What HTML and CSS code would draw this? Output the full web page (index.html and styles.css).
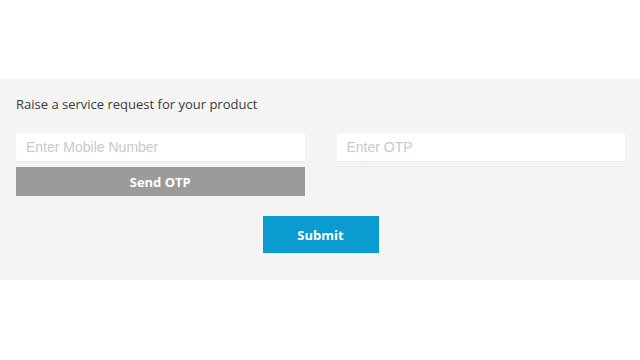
FILE: index.html
```html
<!DOCTYPE html>
<html>
<head>
<meta charset="utf-8">
<link rel="stylesheet" href="styles.css">
</head>
<body>
<div class="top"></div>
<section class="panel">
  <h1 class="title">Raise a service request for your product</h1>
  <div class="row">
    <div class="col">
      <input class="field" type="text" placeholder="Enter Mobile Number">
      <button class="btn-otp">Send OTP</button>
    </div>
    <div class="col">
      <input class="field" type="text" placeholder="Enter OTP">
      <div class="line"></div>
    </div>
  </div>
  <div class="actions">
    <button class="btn-submit">Submit</button>
  </div>
</section>
</body>
</html>
```
FILE: styles.css
```css
html, body {
  margin: 0;
  padding: 0;
  background: #ffffff;
}
body {
  font-family: "Open Sans", "Liberation Sans", sans-serif;
}
.top {
  height: 79px;
}
.panel {
  background: #f4f4f4;
  height: 201px;
  padding: 16px 15px 0 16px;
  box-sizing: border-box;
}
.title {
  margin: 0;
  font-size: 13px;
  font-weight: 400;
  color: #3a3a3a;
  line-height: 18px;
}
.row {
  display: flex;
  gap: 32px;
  margin-top: 20px;
}
.col {
  flex: 1;
  display: flex;
  flex-direction: column;
}
.field {
  height: 29px;
  box-sizing: border-box;
  border: none;
  border-bottom: 1px solid #ececec;
  background: #ffffff;
  padding: 0 10px;
  font-family: "Liberation Sans", Arial, sans-serif;
  font-size: 14px;
  color: #333;
  outline: none;
}
.field::placeholder {
  color: #c8c8c8;
}
.line {
  height: 1px;
  background: #ebebeb;
  margin-top: 4px;
}
.btn-otp {
  margin-top: 5px;
  height: 29px;
  border: none;
  background: #9b9b9b;
  color: #ffffff;
  font-family: "Open Sans", "Liberation Sans", sans-serif;
  font-weight: 700;
  font-size: 13px;
  padding: 0;
}
.actions {
  display: flex;
  justify-content: center;
  margin-top: 20px;
}
.btn-submit {
  width: 116px;
  height: 37px;
  border: none;
  background: #0a9bd0;
  color: #ffffff;
  font-family: "Open Sans", "Liberation Sans", sans-serif;
  font-weight: 700;
  font-size: 13px;
  padding: 0;
}
```
